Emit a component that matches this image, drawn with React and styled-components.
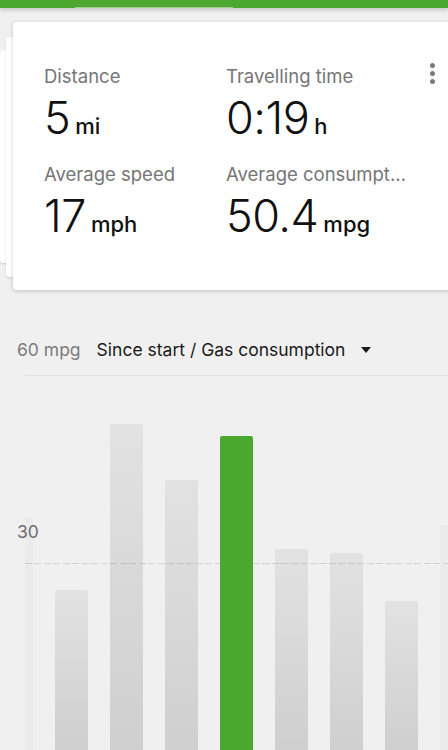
import React from "react";
import styled, { createGlobalStyle } from "styled-components";

const GlobalStyle = createGlobalStyle`
  html, body {
    margin: 0;
    padding: 0;
    background: #f0f0f0;
    overflow: hidden;
  }
  * {
    box-sizing: border-box;
  }
`;

const stats = [
  { label: "Distance", value: "5", unit: "mi" },
  { label: "Travelling time", value: "0:19", unit: "h" },
  { label: "Average speed", value: "17", unit: "mph" },
  { label: "Average consumption", value: "50.4", unit: "mpg" },
];

const bars = [
  { h: 233, ghost: true },
  { h: 160 },
  { h: 326 },
  { h: 270 },
  { h: 314, active: true },
  { h: 201 },
  { h: 197 },
  { h: 149 },
  { h: 225, ghost: true },
];

const App = () => {
  return (
    <Page>
      <GlobalStyle />
      <TopBar>
        <TabIndicator />
      </TopBar>

      <CardStack>
        <Card>
          <StatsGrid>
            {stats.map((s) => (
              <Stat key={s.label}>
                <Label>{s.label}</Label>
                <Value>
                  {s.value}
                  <Unit>{s.unit}</Unit>
                </Value>
              </Stat>
            ))}
          </StatsGrid>
          <MenuButton aria-label="more">
            <span />
            <span />
            <span />
          </MenuButton>
        </Card>
      </CardStack>

      <ChartHeader>
        <Scale>60 mpg</Scale>
        <Selector>
          Since start / Gas consumption
          <Caret />
        </Selector>
      </ChartHeader>

      <Chart>
        <AxisLabel>30</AxisLabel>
        <DashLine />
        <Bars>
          {bars.map((b, i) => (
            <Bar
              key={i}
              $active={b.active}
              $ghost={b.ghost}
              $first={i === 0}
              style={{ height: b.h }}
            />
          ))}
        </Bars>
      </Chart>
    </Page>
  );
};

export default App;

const Page = styled.div`
  width: 448px;
  height: 750px;
  overflow: hidden;
  background: #f0f0f0;
  font-family: Inter, "Liberation Sans", sans-serif;
  display: flex;
  flex-direction: column;
`;

const TopBar = styled.div`
  height: 8px;
  background: #4ba72f;
  box-shadow: 0 2px 4px rgba(0, 0, 0, 0.18);
  position: relative;
  z-index: 2;
  flex-shrink: 0;
`;

const TabIndicator = styled.div`
  position: absolute;
  left: 75px;
  width: 158px;
  bottom: 0;
  height: 1px;
  background: #9fd08e;
`;

const CardStack = styled.div`
  position: relative;
  z-index: 0;
  margin-top: 14px;
  padding-left: 13px;
  flex-shrink: 0;

  &::before,
  &::after {
    content: "";
    position: absolute;
    background: #fff;
    border-radius: 3px;
    box-shadow: 0 1px 2px rgba(0, 0, 0, 0.15);
  }
  &::before {
    left: 6px;
    width: 40px;
    top: 15px;
    bottom: 13px;
  }
  &::after {
    left: 0;
    width: 40px;
    top: 28px;
    bottom: 27px;
    z-index: -1;
  }
`;

const Card = styled.div`
  position: relative;
  z-index: 1;
  width: 450px;
  height: 268px;
  background: #fff;
  border-radius: 4px;
  box-shadow: 0 1px 4px rgba(0, 0, 0, 0.2);
  padding: 43px 0 0 31px;
`;

const StatsGrid = styled.div`
  display: grid;
  grid-template-columns: 182px 180px;
  row-gap: 9px;
`;

const Stat = styled.div`
  display: flex;
  flex-direction: column;
  min-width: 0;
`;

const Label = styled.div`
  font-size: 18.5px;
  line-height: 22px;
  color: #767676;
  white-space: nowrap;
  overflow: hidden;
  text-overflow: ellipsis;
`;

const Value = styled.div`
  font-size: 45px;
  line-height: 56px;
  padding-top: 3px;
  font-weight: 300;
  color: #111;
  letter-spacing: -0.5px;
  white-space: nowrap;
`;

const Unit = styled.span`
  font-size: 22px;
  font-weight: 500;
  margin-left: 5px;
  letter-spacing: 0;
`;

const MenuButton = styled.div`
  position: absolute;
  top: 41px;
  right: 28px;
  display: flex;
  flex-direction: column;
  gap: 3px;

  span {
    width: 5px;
    height: 5px;
    border-radius: 50%;
    background: #7a7a7a;
  }
`;

const ChartHeader = styled.div`
  display: flex;
  align-items: center;
  gap: 16px;
  height: 86px;
  padding-top: 34px;
  border-bottom: 1px solid #e0e0e0;
  margin-left: 25px;
  position: relative;
  flex-shrink: 0;
`;

const Scale = styled.span`
  font-size: 17.5px;
  color: #7b7b7b;
  margin-left: -8px;
`;

const Selector = styled.span`
  font-size: 17.5px;
  color: #1a1a1a;
  display: flex;
  align-items: center;
  gap: 10px;
`;

const Caret = styled.span`
  width: 0;
  height: 0;
  border-left: 5.5px solid transparent;
  border-right: 5.5px solid transparent;
  border-top: 6px solid #1a1a1a;
  margin-left: 6px;
`;

const Chart = styled.div`
  position: relative;
  flex: 1;
`;

const AxisLabel = styled.span`
  position: absolute;
  left: 17px;
  top: 145px;
  font-size: 17.5px;
  color: #6f6f6f;
  z-index: 3;
`;

const DashLine = styled.div`
  position: absolute;
  left: 25px;
  right: 0;
  top: 187px;
  height: 1px;
  background: repeating-linear-gradient(
    to right,
    rgba(0, 0, 0, 0.12) 0 7px,
    transparent 7px 9.5px
  );
  z-index: 2;
`;

const Bars = styled.div`
  position: absolute;
  left: 0;
  right: 0;
  bottom: 0;
  top: 0;
  display: flex;
  align-items: flex-end;
  gap: 22px;
  padding-left: 25px;
`;

const Bar = styled.div`
  flex-shrink: 0;
  width: ${(p) => (p.$first ? "8px" : "33px")};
  border-radius: 2px 2px 0 0;
  background: ${(p) =>
    p.$active
      ? "#4ba82f"
      : p.$ghost
      ? "#ebebeb"
      : "linear-gradient(to bottom, #e2e2e2, #cfcfcf)"};
  position: relative;
  z-index: ${(p) => (p.$active ? 3 : 1)};
`;
